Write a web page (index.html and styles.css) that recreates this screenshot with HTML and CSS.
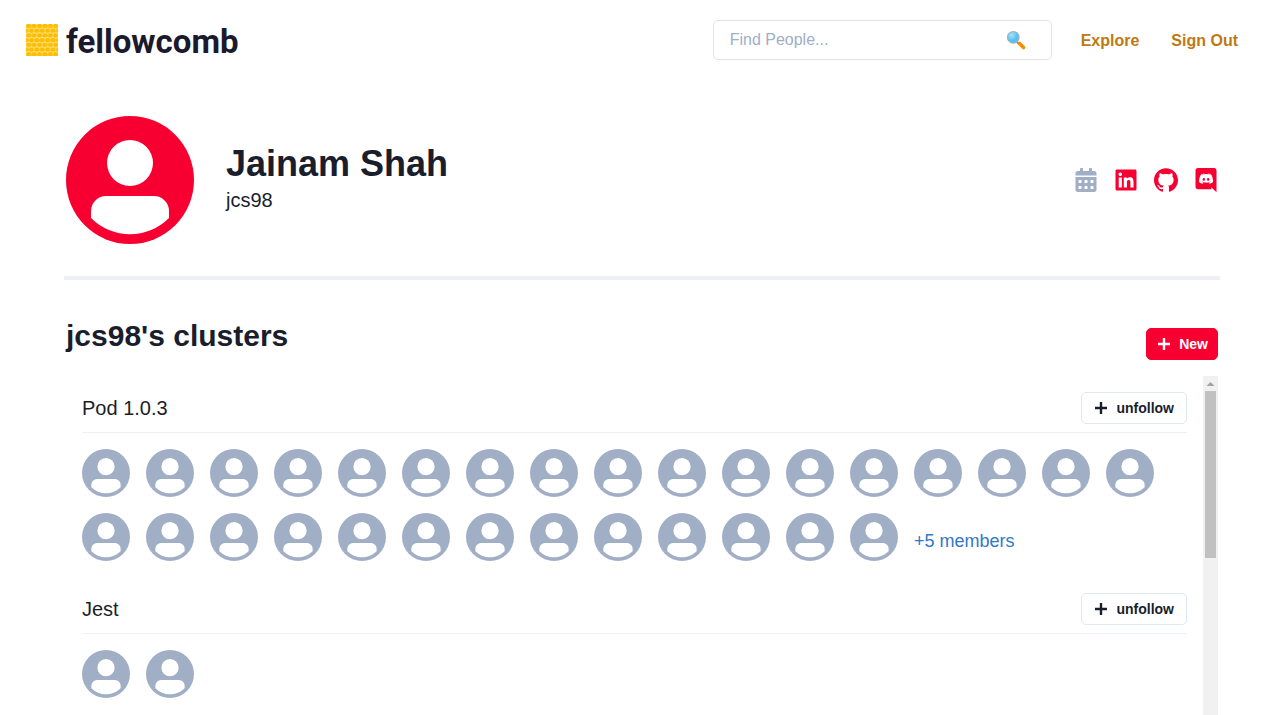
FILE: index.html
```
<!DOCTYPE html>
<html lang="en">
<head>
<meta charset="utf-8">
<meta name="viewport" content="width=device-width, initial-scale=1">
<title>fellowcomb</title>
<link rel="stylesheet" href="styles.css">
</head>
<body>
<svg class="sprite" aria-hidden="true">
  <symbol id="avatar" viewBox="0 0 128 128">
    <circle cx="64" cy="64" r="64" fill="currentColor"/>
    <circle cx="64" cy="47" r="23" fill="#fff"/>
    <path fill="#fff" d="M25 102V95a15 15 0 0 1 15-15h48a15 15 0 0 1 15 15v7A55 55 0 0 1 25 102z"/>
  </symbol>
  <symbol id="plus" viewBox="0 0 12 12">
    <path d="M6 0v12M0 6h12" stroke="currentColor" stroke-width="2.4" fill="none"/>
  </symbol>
</svg>
<header class="topbar">
  <a class="brand" href="#">
    <svg class="brand-mark" viewBox="0 0 32 32" aria-hidden="true">
      <defs>
        <pattern id="comb" width="5.4" height="9.4" patternUnits="userSpaceOnUse">
          <rect width="5.4" height="9.4" fill="#ffeba0"/>
          <path fill="#ffbd00" d="M1.200 0h3L5.200 1.200v2L4.200 4.300h-3L.2 3.200v-2zM-1.500 4.700h3l1 1.200v2l-1 1.100h-3zM3.900 4.700h3v4.300h-3l-1-1.100v-2z"/>
        </pattern>
      </defs>
      <rect width="32" height="32" fill="url(#comb)"/>
    </svg>
    <span class="brand-name">fellowcomb</span>
  </a>
  <nav class="nav">
    <form class="search" role="search">
      <input class="search-input" type="text" placeholder="Find People..." aria-label="Find People">
      <button class="search-button" type="button" aria-label="Search">
        <svg width="20" height="20" viewBox="0 0 20 20" aria-hidden="true">
          <defs><radialGradient id="lens" cx=".35" cy=".3"><stop offset="0" stop-color="#a6e4fc"/><stop offset="1" stop-color="#50c3f5"/></radialGradient></defs>
          <path d="M10.500 11.500l2.500 2.500" stroke="#8c9296" stroke-width="2"/>
          <path d="M13.500 13.500l4 4" stroke="#fb8c00" stroke-width="3.600" stroke-linecap="round"/>
          <circle cx="7.300" cy="7.300" r="5.800" fill="url(#lens)" stroke="#a3b1b8" stroke-width="1.200"/>
        </svg>
      </button>
    </form>
    <a class="nav-link" href="#">Explore</a>
    <a class="nav-link" href="#">Sign Out</a>
  </nav>
</header>
<main class="page">
  <section class="profile">
    <svg class="profile-avatar" role="img" aria-label="Jainam Shah"><use href="#avatar"/></svg>
    <div class="profile-names">
      <h1 class="profile-name">Jainam Shah</h1>
      <p class="profile-handle">jcs98</p>
    </div>
    <div class="socials">
      <a class="social social-off" href="#" aria-label="Calendar"><svg viewBox="0 0 448 512"><path d="M0 464c0 26.500 21.500 48 48 48h352c26.500 0 48-21.500 48-48V192H0zm320-196q0-12 12-12h40q12 0 12 12v40q0 12-12 12h-40q-12 0-12-12zm0 128q0-12 12-12h40q12 0 12 12v40q0 12-12 12h-40q-12 0-12-12zM192 268q0-12 12-12h40q12 0 12 12v40q0 12-12 12h-40q-12 0-12-12zm0 128q0-12 12-12h40q12 0 12 12v40q0 12-12 12h-40q-12 0-12-12zM64 268q0-12 12-12h40q12 0 12 12v40q0 12-12 12H76q-12 0-12-12zm0 128q0-12 12-12h40q12 0 12 12v40q0 12-12 12H76q-12 0-12-12zM400 64h-48V16c0-8.800-7.200-16-16-16h-32c-8.800 0-16 7.200-16 16v48H160V16c0-8.800-7.200-16-16-16h-32c-8.800 0-16 7.200-16 16v48H48C21.500 64 0 85.500 0 112v48h448v-48c0-26.500-21.500-48-48-48z" fill-rule="evenodd"/></svg></a>
      <a class="social" href="#" aria-label="LinkedIn"><svg viewBox="0 0 448 512"><path d="M416 32H31.900C14.300 32 0 46.500 0 64.300v383.400C0 465.500 14.300 480 31.900 480H416c17.600 0 32-14.500 32-32.300V64.300c0-17.800-14.400-32.300-32-32.300zM135.400 416H69V202.200h66.500V416zm-33.200-243c-21.300 0-38.500-17.300-38.500-38.500S80.900 96 102.200 96c21.200 0 38.500 17.300 38.500 38.500 0 21.300-17.200 38.500-38.500 38.500zm282.100 243h-66.400V312c0-24.800-.5-56.700-34.500-56.700-34.600 0-39.900 27-39.900 54.900V416h-66.400V202.200h63.700v29.200h.9c8.900-16.800 30.600-34.500 62.900-34.500 67.200 0 79.700 44.300 79.700 101.900V416z"/></svg></a>
      <a class="social" href="#" aria-label="GitHub"><svg viewBox="0 0 24 24"><path d="M12 .297c-6.630 0-12 5.373-12 12 0 5.303 3.438 9.800 8.205 11.385.6.113.82-.258.82-.577 0-.285-.01-1.040-.015-2.040-3.338.724-4.042-1.610-4.042-1.610C4.422 18.070 3.633 17.700 3.633 17.700c-1.087-.744.084-.729.084-.729 1.205.084 1.838 1.236 1.838 1.236 1.070 1.835 2.809 1.305 3.495.998.108-.776.417-1.305.76-1.605-2.665-.3-5.466-1.332-5.466-5.930 0-1.310.465-2.380 1.235-3.220-.135-.303-.54-1.523.105-3.176 0 0 1.005-.322 3.300 1.230.96-.267 1.980-.399 3-.405 1.020.006 2.040.138 3 .405 2.280-1.552 3.285-1.230 3.285-1.230.645 1.653.24 2.873.12 3.176.765.84 1.230 1.910 1.230 3.220 0 4.610-2.805 5.625-5.475 5.920.42.36.81 1.096.81 2.220 0 1.606-.015 2.896-.015 3.286 0 .315.21.69.825.57C20.565 22.092 24 17.592 24 12.297c0-6.627-5.373-12-12-12"/></svg></a>
      <a class="social" href="#" aria-label="Discord"><svg viewBox="0 0 448 512"><path d="M297.216 243.200c0 15.616-11.520 28.416-26.112 28.416-14.336 0-26.112-12.800-26.112-28.416s11.520-28.416 26.112-28.416c14.592 0 26.112 12.800 26.112 28.416zm-119.552-28.416c-14.592 0-26.112 12.800-26.112 28.416s11.776 28.416 26.112 28.416c14.592 0 26.112-12.800 26.112-28.416.256-15.616-11.520-28.416-26.112-28.416zM448 52.736V512c-64.494-56.994-43.868-38.128-118.784-107.776l13.568 47.360H52.480C23.552 451.584 0 428.032 0 398.848V52.736C0 23.552 23.552 0 52.480 0h343.040C424.448 0 448 23.552 448 52.736zm-72.960 242.688c0-82.432-36.864-149.248-36.864-149.248-36.864-27.648-71.936-26.880-71.936-26.880l-3.584 4.096c43.520 13.312 63.744 32.512 63.744 32.512-60.811-33.329-132.244-33.335-191.232-7.424-9.472 4.352-15.104 7.424-15.104 7.424s21.248-20.224 67.328-33.536l-2.560-3.072s-35.072-.768-71.936 26.880c0 0-36.864 66.816-36.864 149.248 0 0 21.504 37.120 78.080 38.912 0 0 9.472-11.520 17.152-21.248-32.512-9.728-44.800-30.208-44.800-30.208 3.766 2.636 9.976 6.053 10.496 6.400 43.210 24.198 104.588 32.126 159.744 8.960 8.960-3.328 18.944-8.192 29.440-15.104 0 0-12.800 20.992-46.336 30.464 7.680 9.728 16.896 20.736 16.896 20.736 56.576-1.792 78.336-38.912 78.336-38.912z"/></svg></a>
    </div>
  </section>
  <section class="clusters">
    <div class="clusters-head">
      <h2 class="clusters-title">jcs98's clusters</h2>
      <button class="button button-primary" type="button"><svg class="plus"><use href="#plus"/></svg>New</button>
    </div>
    <div class="cluster-panel">
      <div class="cluster-list">
        <article class="cluster">
          <div class="cluster-head">
            <h3 class="cluster-name">Pod 1.0.3</h3>
            <button class="button" type="button"><svg class="plus"><use href="#plus"/></svg>unfollow</button>
          </div>
          <div class="members" data-count="30"><a class="more" href="#">+5 members</a></div>
        </article>
        <article class="cluster">
          <div class="cluster-head">
            <h3 class="cluster-name">Jest</h3>
            <button class="button" type="button"><svg class="plus"><use href="#plus"/></svg>unfollow</button>
          </div>
          <div class="members" data-count="2"></div>
        </article>
      </div>
      <div class="scrollbar" aria-hidden="true">
        <svg class="scrollbar-up" viewBox="0 0 15 15"><path d="M3.500 10L7.500 6l4 4z" fill="#a3a3a3"/></svg>
        <div class="scrollbar-thumb"></div>
      </div>
    </div>
  </section>
</main>
<script src="members.js"></script>
</body>
</html>
```
FILE: styles.css
```
* { box-sizing: border-box; }

body {
  display: flex;
  flex-direction: column;
  margin: 0;
  height: 100vh;
  background: #fff;
  color: #1a1e2c;
  font-family: "Liberation Sans", Arial, sans-serif;
  font-size: 16px;
  line-height: 24px;
}

h1, h2, h3, p { margin: 0; }
a { text-decoration: none; }
svg { display: block; }
.sprite { position: absolute; width: 0; height: 0; }

.topbar {
  display: flex;
  align-items: center;
  justify-content: space-between;
  padding: 20px 41px 20px 26px;
}
.brand { display: flex; align-items: center; gap: 8px; color: #1a1a2c; }
.brand-mark { width: 32px; height: 32px; }
.brand-name {
  padding-top: 4px;
  font-family: Roboto, sans-serif;
  font-size: 33px;
  font-weight: 700;
  line-height: 36px;
}
.nav { display: flex; align-items: center; gap: 32px; }
.nav-link { padding-top: 1px; color: #bd7a12; font-weight: 700; }
.search {
  display: flex;
  align-items: center;
  width: 339px;
  height: 40px;
  margin-right: -3px;
  padding: 0 25px 0 16px;
  border: 1px solid #e2e2f0;
  border-radius: 5px;
}
.search-input {
  flex: 1;
  min-width: 0;
  padding: 0;
  border: 0;
  outline: 0;
  background: none;
  color: inherit;
  font: inherit;
}
.search-input::placeholder { color: #a0aec6; opacity: 1; }
.search-button { padding: 0; border: 0; background: none; }

.page {
  flex: 1;
  display: flex;
  flex-direction: column;
  min-height: 0;
  padding: 36px 59px 0 64px;
}

.profile {
  display: flex;
  align-items: center;
  gap: 32px;
  padding: 0 2px 32px;
  border-bottom: 4px solid #edf0f5;
}
.profile-avatar { width: 128px; height: 128px; color: #f70031; }
.profile-names { flex: 1; padding-bottom: 8px; }
.profile-name { font-size: 36px; line-height: 48px; }
.profile-handle { font-size: 20px; line-height: 24px; }
.socials { display: flex; gap: 16px; }
.social { color: #f70031; }
.social-off { color: #a0aec6; }
.social svg { width: 24px; height: 24px; fill: currentColor; }

.clusters {
  flex: 1;
  display: flex;
  flex-direction: column;
  min-height: 0;
  padding: 32px 2px 0;
}
.clusters-head {
  display: flex;
  align-items: flex-end;
  justify-content: space-between;
  padding-bottom: 16px;
}
.clusters-title { font-size: 30px; line-height: 48px; }

.button {
  display: flex;
  align-items: center;
  gap: 9px;
  height: 32px;
  padding: 0 12px 0 13px;
  border: 1px solid #e2e8f0;
  border-radius: 5px;
  background: #fff;
  color: inherit;
  font: 700 14px/20px "Liberation Sans", Arial, sans-serif;
}
.button-primary { padding: 0 9px 0 11px; border-color: #f70031; background: #f70031; color: #fff; }
.plus { width: 12px; height: 12px; }

.cluster-panel { flex: 1; display: flex; min-height: 0; }
.cluster-list {
  flex: 1;
  padding: 0 16px;
  overflow-y: auto;
  scrollbar-width: none;
}
.scrollbar {
  display: flex;
  flex-direction: column;
  width: 15px;
  background: #f1f1f1;
}
.scrollbar-up { width: 15px; height: 15px; }
.scrollbar-thumb { height: 167px; margin: 0 2px; background: #c1c1c1; }

.cluster { padding-top: 16px; }
.cluster-head {
  display: flex;
  align-items: center;
  justify-content: space-between;
  padding-bottom: 8px;
  border-bottom: 1px solid #edf0f5;
}
.cluster-name { font-size: 20px; font-weight: 400; line-height: 32px; }
.members { display: flex; flex-wrap: wrap; align-items: center; gap: 16px; padding: 16px 0; }
.member { width: 48px; height: 48px; color: #a0aec6; }
.more { padding-top: 8px; color: #3178c6; font-size: 18px; }
```
FILE: members.js
```
document.querySelectorAll(".members").forEach(function (row) {
  var avatars = "";
  for (var i = 0; i < Number(row.dataset.count); i++) {
    avatars += '<svg class="member" role="img" aria-label="Member"><use href="#avatar"/></svg>';
  }
  row.insertAdjacentHTML("afterbegin", avatars);
});
```
